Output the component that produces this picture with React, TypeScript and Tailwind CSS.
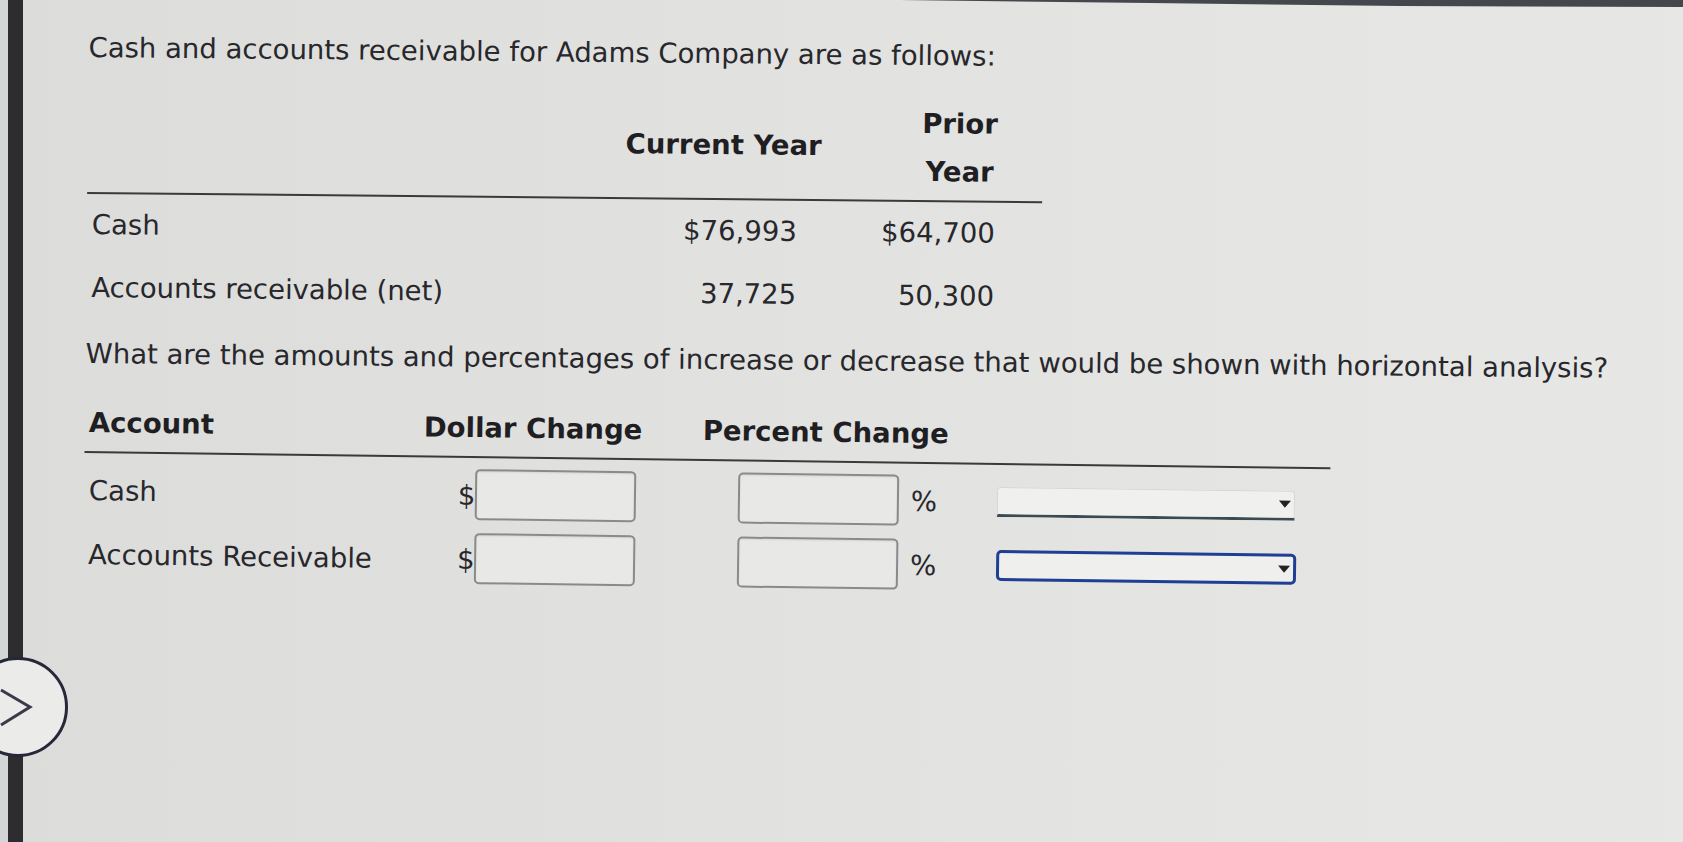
import React from "react";

const font = { fontFamily: '"DejaVu Sans", Verdana, sans-serif' };

function Caret() {
  return (
    <svg width="12" height="9" viewBox="0 0 12 9" className="shrink-0">
      <path d="M0 1 L12 1 L6 8 Z" fill="#222" />
    </svg>
  );
}

function AmountBox() {
  return (
    <div className="h-[51px] w-[161px] rounded-[5px] border-2 border-[#8a8a8a] bg-[#e8e8e7] shadow-[inset_0_1px_2px_rgba(0,0,0,0.08)]" />
  );
}

function ChangeSelect({ focused }: { focused?: boolean }) {
  if (focused) {
    return (
      <div className="flex h-[31px] w-[300px] items-center justify-end rounded-[5px] border-[3px] border-[#1f3f94] bg-[#efefee] pr-[3px]">
        <Caret />
      </div>
    );
  }
  return (
    <div className="flex h-[30px] w-[298px] items-center justify-end rounded-t-[4px] border border-b-[3px] border-[#d6d6d4] border-b-[#3b4b53] bg-[#f0f0ef] pr-[3px]">
      <Caret />
    </div>
  );
}

export default function App() {
  const rows = [
    { label: "Cash", current: "$76,993", prior: "$64,700" },
    { label: "Accounts receivable (net)", current: "37,725", prior: "50,300" },
  ];
  const answers = [{ label: "Cash" }, { label: "Accounts Receivable", focused: true }];

  return (
    <div
      className="relative flex h-[842px] w-[1683px] overflow-hidden bg-linear-to-r from-[#dcdcda] via-[#e2e2e0] to-[#e7e7e6] text-[27.5px] text-[#27272c]"
      style={font}
    >
      {/* bezel edges */}
      <div className="w-[8px] shrink-0 bg-[#d3d6d6]" />
      <div className="w-[15px] shrink-0 bg-[#2d2d2f]" />

      <div className="flex-1 pl-[66px]">
        <div className="origin-top-left rotate-[0.55deg]">
          {/* Title */}
          <div className="pt-[31px] leading-[32px]">
            Cash and accounts receivable for Adams Company are as follows:
          </div>

          {/* Balance table */}
          <div className="mt-[28px] w-[955px]">
            <div className="flex h-[103px] items-start border-b-2 border-[#3a3a3d] pb-[7px] font-bold text-[#1e1e23]">
              <div className="w-[511px]" />
              <div className="flex h-[96px] w-[250px] items-center justify-center">Current Year</div>
              <div className="flex w-[149px] justify-end">
                <div className="inline-block text-center leading-[48px]">
                  Prior
                  <br />
                  Year
                </div>
              </div>
            </div>
            <div className="flex flex-col gap-[31px] pt-[14px]">
              {rows.map((r) => (
                <div key={r.label} className="flex h-[32px] items-center leading-[32px]">
                  <div className="w-[511px] pl-[5px]">{r.label}</div>
                  <div className="w-[199px] text-right">{r.current}</div>
                  <div className="w-[198px] text-right">{r.prior}</div>
                </div>
              ))}
            </div>
          </div>

          {/* Question */}
          <div className="mt-[34px] leading-[32px]">
            What are the amounts and percentages of increase or decrease that would be shown with horizontal analysis?
          </div>

          {/* Answer table */}
          <div className="mt-[37px] w-[1246px] origin-top-left rotate-[0.2deg]">
            <div className="flex border-b-2 border-[#3a3a3d] pb-[13px] font-bold leading-[32px] text-[#1e1e23]">
              <div className="w-[339px] pl-[4px]">Account</div>
              <div className="w-[279px]">Dollar Change</div>
              <div>Percent Change</div>
            </div>
            <div className="flex flex-col gap-[13px] pt-[11px]">
              {answers.map((a) => (
                <div key={a.label} className="flex h-[51px] items-center">
                  <div className="w-[374px] pl-[5px] leading-[32px]">{a.label}</div>
                  <div className="w-[17px] leading-[32px]">$</div>
                  <AmountBox />
                  <div className="ml-[102px]">
                    <AmountBox />
                  </div>
                  <div className="ml-[12px] leading-[32px]">%</div>
                  <div className="ml-[60px]">
                    <ChangeSelect focused={a.focused} />
                  </div>
                </div>
              ))}
            </div>
          </div>
        </div>
      </div>

      {/* top bezel shadow */}
      <svg className="absolute left-0 top-0" width="1683" height="10" viewBox="0 0 1683 10">
        <path d="M900 0 L1683 0 L1683 7 L1400 6 L1150 3 Z" fill="#44474b" />
      </svg>

      {/* side navigation button */}
      <div className="absolute left-[-32px] top-[657px] h-[100px] w-[100px] rounded-full border-[3px] border-[#27273a] bg-[#ebebea]" />
      <svg className="absolute left-0 top-[686px]" width="40" height="44" viewBox="0 0 40 44">
        <path d="M1 4 L30 21 L1 39" fill="none" stroke="#3a3a4a" strokeWidth="3" strokeLinejoin="miter" />
      </svg>
    </div>
  );
}
